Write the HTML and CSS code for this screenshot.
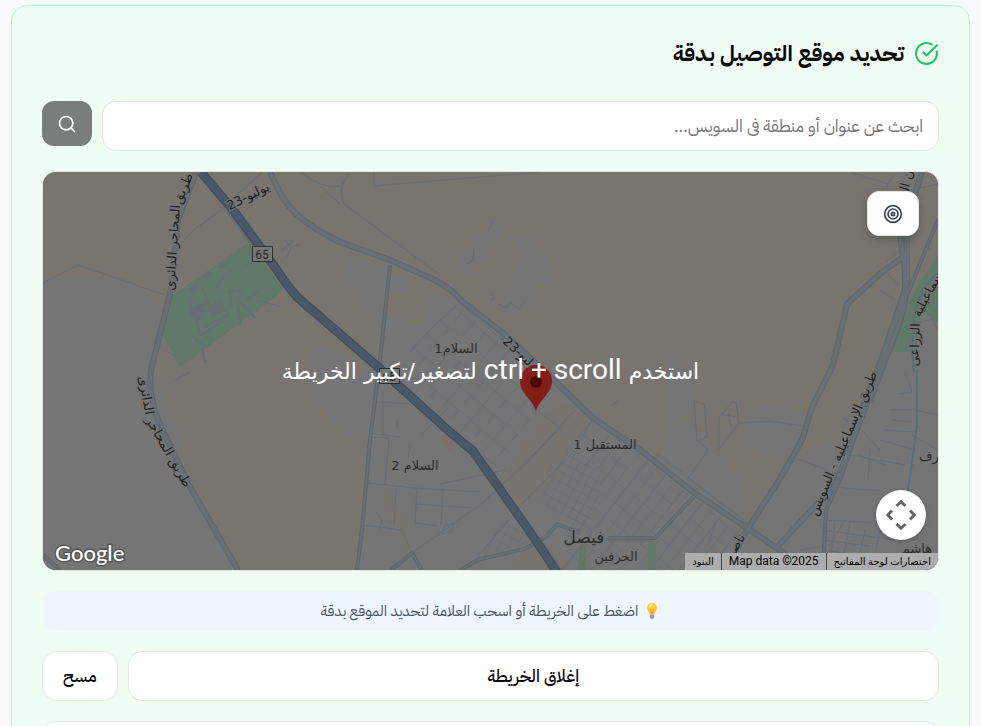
FILE: index.html
```
<!DOCTYPE html>
<html lang="ar" dir="rtl">
<head>
<meta charset="utf-8">
<meta name="viewport" content="width=device-width, initial-scale=1">
<title>تحديد موقع التوصيل</title>
<link rel="stylesheet" href="styles.css">
</head>
<body>
<main class="page">
  <section class="card">
    <header class="card-head">
      <svg class="check" viewBox="0 0 24 24" aria-hidden="true"><path d="M21.8 10A10 10 0 1 1 17 3.335"/><path d="m9 11 3 3L22 4"/></svg>
      <h1>تحديد موقع التوصيل بدقة</h1>
    </header>

    <form class="search">
      <input class="field" type="text" aria-label="ابحث عن عنوان" placeholder="ابحث عن عنوان أو منطقة فى السويس...">
      <button class="search-btn" type="button" aria-label="بحث">
        <svg viewBox="0 0 24 24" aria-hidden="true"><circle cx="11" cy="11" r="8"/><path d="m21 21-4.3-4.3"/></svg>
      </button>
    </form>

    <div class="map">
      <svg class="map-art" viewBox="43 172 895 398" preserveAspectRatio="xMidYMid slice" aria-hidden="true">
        <defs>
          <pattern id="blocks" width="30" height="19" patternUnits="userSpaceOnUse" patternTransform="rotate(40)"><path d="M0 0H30M0 0V19M15 0V10"/></pattern>
          <pattern id="dense" width="8" height="9" patternUnits="userSpaceOnUse" patternTransform="rotate(28)"><path d="M0 0H8M0 0V9"/></pattern>
          <pattern id="loose" width="23" height="17" patternUnits="userSpaceOnUse" patternTransform="rotate(38)"><path d="M0 0H23M0 0V17M12 0V17"/></pattern>
        </defs>
        <rect class="sand" x="43" y="172" width="895" height="398"/>
        <!-- built-up land -->
        <g class="urban">
          <path d="M43 278H125L143 290 160 308 150 370 166 400 178 430 184 462 205 515 237 570H43Z"/>
          <path d="M350 253 388 266 386 300 380 362 372 322 360 295 343 276Z"/>
          <path d="M391 276 407 278 408 289 399 293 389 288Z"/>
          <path d="M383 322 393 313 413 323 424 322 433 290 463 302 503 333 560 385 640 446 693 490 790 557 800 570H358L366 490 376 385Z"/>
          <path d="M308 355 322 347 335 352 350 367 376 374 374 435 345 435 318 405 306 380Z"/>
          <path d="M494 220 504 229 485 258 468 276 461 267 463 250Z"/>
          <path d="M508 235 532 238 552 267 551 283 538 285 535 301 523 313 508 317 497 305 511 292 513 273 522 253Z"/>
          <path d="M670 353 692 374 694 405 683 418 703 433 738 475 747 528 693 490 660 465 668 435Z"/>
          <path d="M747 410 775 402 806 415 802 438 780 462 744 445Z"/>
          <path d="M747 528 790 460 835 440 862 400 886 352 938 250V570H790Z"/>
        </g>
        <g class="sand2">
          <path d="M558 400 592 420 565 455 560 478 505 512 495 493 520 450Z"/>
          <path d="M536 540 565 560 570 570H505Z"/>
          <path d="M382 485 400 510 412 553 422 570 405 550Z"/>
        </g>
        <g class="green">
          <path d="M170 297 187 285 248 243 283 288 278 295 224 335 180 367 163 335Z"/>
          <path d="M938 255 915 290 900 323 886 352 911 352 920 338 922 312 938 323Z"/>
          <path d="M580 545H586V570H578ZM648 543H656V570H648Z"/>
        </g>
        <path class="blush" d="M440 440 448 432 458 440 450 451Z"/>
        <!-- street fabric -->
        <g class="fabric">
          <path fill="url(#blocks)" d="M411 350 458 303 555 386 500 470 470 447 398 374Z"/>
          <path fill="url(#dense)" d="M547 468 568 452 600 470 598 500 575 530 540 502Z"/>
          <path fill="url(#loose)" d="M564 452 592 420 693 492 655 541 648 570H560L575 530 598 500 600 472Z"/>
          <path fill="url(#loose)" d="M693 492 740 526 748 552 735 570H650L657 541Z"/>
          <path fill="url(#dense)" d="M500 524 530 528 545 545 500 552 475 560 490 540Z"/>
          <path fill="url(#dense)" d="M573 505 596 508 590 532 562 535Z"/>
        </g>
        <g class="lane">
          <path d="M43 283 78 265 165 295M182 243 196 228 220 211 262 172M300 172Q324 190 340 186M320 186 340 204M374 172V186L540 172M349 172 341 188 343 203 440 275"/>
          <path d="M281 251 294 241 289 240M285 240 291 248 287 257M293 246 300 245M493 222 487 233M474 249 473 260 467 264M491 292 495 299 490 300M498 304 506 308 511 303 519 309 524 302"/>
          <path d="M411 350 440 320 460 303 525 360M376 402 410 404M370 433 400 437M367 483 415 488 480 492M372 437 389 438 385 485M417 489 415 523 438 526M443 488 441 525M417 504 472 508M362 525 402 530 412 553M391 570 412 553 480 505 527 462 575 410"/>
          <path d="M383 390V434M397 420V428M410 445 408 460M376 512 382 520 379 530M396 489 394 525M445 525 455 523 451 532 442 534ZM475 560 522 504 575 450 592 420M527 462 560 428 530 405M421 435 448 408M440 484 505 470"/>
          <path d="M648 448 756 530M658 453 705 490 755 528M694 401 704 404 707 437 697 441ZM719 449V418L732 402H736L739 423 719 449M720 414 736 417M740 423 768 421 805 426M699 441 708 450 687 480M731 428 728 413M797 459 838 474M700 496 717 520 708 545M655 541H608L560 535"/>
          <path d="M850 172 888 184 886 193M895 175 882 190M900 192 938 184M885 270 898 286M880 290 895 300M886 262 900 250M843 418 860 428 880 450M850 455 905 465M835 487 880 491M825 520 880 523M822 540 870 546M885 430 915 432M880 440 915 450M870 448 868 480M858 455 886 465M905 172 900 215M925 240 930 250M920 180 934 172M890 410H912M892 420 912 422M915 410 938 415M912 435 938 450M800 550 830 545 845 520M822 530 895 540M822 550 890 560M835 520 830 565M850 522 842 565M865 530 857 565M880 530 873 565M918 323 932 319 938 330M905 372 912 392 900 394"/>
          <path d="M190 372 175 380M246 298 280 306M168 352 176 356M612 405 618 401"/>
        </g>
        <g class="parklane"><path d="M191 297V315L215 308M202 288 212 315M189 312 209 302M193 310 201 335 225 320M197 343 206 346M192 335 202 345 205 363M225 275 215 290M200 280 210 272M232 308 229 291 240 290V302L255 318M238 305 240 325M246 300 258 292M203 328 230 314M219 268 229 262M227 278 232 275M245 265 252 262"/><path class="building" d="M191 308 202 303 205 318 195 323ZM209 306 221 300 225 311 213 316ZM189 287 197 283 199 290 191 293Z"/></g>
        <path class="water" d="M917 370V425L908 490 902 530M938 272 924 288 915 310 912 350 914 372"/>
        <!-- secondary roads -->
        <g class="edge">
          <path d="M270 172 280 193Q294 220 340 242L390 260 435 280Q450 288 463 302L503 333 540 367 593 418 640 450 693 492 747 528 790 557 810 570"/>
          <path d="M196 172 178 220 171 290 151 370Q147 400 165 435L190 487 238 570"/>
          <path d="M906 255 882 272 847 304 833 365 812 407 802 440 778 482 750 525 738 545M777 547 835 485 880 370"/>
          <path d="M922 172Q905 220 907 262T893 340L870 400M895 200 905 270 905 290 883 355 862 410"/>
        </g>
        <g class="edge thin">
          <path d="M390 265 380 360 370 440 362 530 357 570"/>
          <path d="M460 570 480 559 525 549 546 537 557 524 580 533M608 538H655L697 493"/>
          <path d="M938 220 900 312 880 365 840 480 826 510 823 570"/>
          <path d="M43 555 60 570M391 570 412 553 422 570"/>
        </g>
        <g class="road">
          <path d="M270 172 280 193Q294 220 340 242L390 260 435 280Q450 288 463 302L503 333 540 367 593 418 640 450 693 492 747 528 790 557 810 570"/>
          <path d="M196 172 178 220 171 290 151 370Q147 400 165 435L190 487 238 570"/>
          <path d="M906 255 882 272 847 304 833 365 812 407 802 440 778 482 750 525 738 545M777 547 835 485 880 370"/>
          <path d="M922 172Q905 220 907 262T893 340L870 400M895 200 905 270 905 290 883 355 862 410"/>
        </g>
        <g class="road thin">
          <path d="M390 265 380 360 370 440 362 530 357 570"/>
          <path d="M460 570 480 559 525 549 546 537 557 524 580 533M608 538H655L697 493"/>
          <path d="M938 220 900 312 880 365 840 480 826 510 823 570"/>
          <path d="M43 555 60 570M391 570 412 553 422 570"/>
        </g>
        <path class="side" d="M226 208 252 243"/>
        <path class="highway-edge" d="M201 172 233 210 277 270Q285 283 297 297L340 334 378 367 450 432 473 451 497 485 537 542 557 572"/>
        <path class="highway" d="M201 172 233 210 277 270Q285 283 297 297L340 334 378 367 450 432 473 451 497 485 537 542 557 572"/>
        <g class="shield"><rect x="252.500" y="246.500" width="20" height="15"/><text x="262" y="259">65</text><rect x="379.500" y="368.500" width="20" height="15"/><text x="389" y="381">65</text></g>
        <g class="label street">
          <text transform="translate(187 190) rotate(-67)">طريق</text>
          <text transform="translate(177 248) rotate(-86)">المحاجر الدائرى</text>
          <text transform="translate(250 200) rotate(-27)">يوليو-23</text>
          <text transform="translate(519 358) rotate(43)">يوليو-23</text>
          <text transform="translate(142 396) rotate(80)">الدائرى</text>
          <text transform="translate(165 454) rotate(60)">طريق المحاجر</text>
          <text transform="translate(847 445) rotate(-67)">طريق الإسماعيليه - السويس</text>
          <text transform="translate(931 296) rotate(-62)">سماعيلية</text>
          <text transform="translate(919 345) rotate(-88)">الزراعى</text>
          <text transform="translate(910 184) rotate(-75)">ن ال</text>
          <text transform="translate(739 548) rotate(-60)">ناصر</text>
        </g>
        <g class="label place">
          <text x="456" y="353">السلام1</text>
          <text x="415" y="470">السلام 2</text>
          <text x="605" y="449">المستقبل 1</text>
          <text x="616" y="561">الحرفين</text>
          <text x="929" y="461">رف</text>
          <text x="917" y="553">هاشم</text>
          <text class="big" x="584" y="543">فيصل</text>
        </g>
        <path class="pin" d="M536 412C534 400 520 394 520 381A16 16 0 0 1 552 381C552 394 538 400 536 412Z"/>
        <circle class="pin-dot" cx="536" cy="382" r="6"/>
      </svg>

      <p class="hint"><span>استخدم <bdi class="keys">ctrl + scroll</bdi> لتصغير/تكبير الخريطة</span></p>
      <button class="locate" type="button" aria-label="موقعي">
        <svg viewBox="0 0 24 24" aria-hidden="true"><circle cx="12" cy="12" r="10"/><circle cx="12" cy="12" r="6"/><circle cx="12" cy="12" r="2"/></svg>
      </button>
      <button class="pan" type="button" aria-label="التحكم في الخريطة">
        <svg viewBox="0 0 30 30" aria-hidden="true"><path d="M10.500 6 15 1.800 19.500 6M10.500 24 15 28.200 19.500 24M6 10.500 1.800 15 6 19.500M24 10.500 28.200 15 24 19.500"/></svg>
      </button>
      <a class="brand" href="#">Google</a>
      <div class="credits"><a href="#">اختصارات لوحة المفاتيح</a><span dir="ltr">Map data ©2025</span><a href="#">البنود</a></div>
    </div>

    <p class="tip">
      <svg viewBox="0 0 16 16" aria-hidden="true"><path fill="#fcc934" d="M8 0a5 5 0 0 0-5 5c0 2.600 2.200 3.700 2.500 6.500h5C10.800 8.700 13 7.600 13 5a5 5 0 0 0-5-5Z"/><path fill="#fff0a0" d="M5 3a3 3 0 0 1 3-2v2L6 5Z"/><path fill="none" stroke="#f19b18" d="M6.500 6 7.500 11M9.500 6 8.500 11"/><path fill="#9aa3ab" d="M5.800 11.500h4.400v3L9 16H7l-1.200-1.500Z"/></svg>
      <span>اضغط على الخريطة أو اسحب العلامة لتحديد الموقع بدقة</span>
    </p>

    <div class="actions">
      <button class="btn wide" type="button">إغلاق الخريطة</button>
      <button class="btn" type="button">مسح</button>
    </div>
    <div class="panel"></div>
  </section>
</main>
</body>
</html>
```
FILE: styles.css
```
* { box-sizing: border-box; }

body {
  margin: 0;
  background: #f8fafc;
  color: #0a0a0a;
  font-family: "IBM Plex Sans Arabic", "Noto Sans Arabic", "DejaVu Sans", sans-serif;
}

button, input { font: inherit; }
svg { display: block; }
h1, p { margin: 0; }

.page { height: 100vh; padding: 5px 11px 0; overflow: hidden; }

.card {
  display: flex;
  flex-direction: column;
  gap: 20px;
  padding: 30px;
  border: 1px solid #bbf7d0;
  border-radius: 16px;
  background: #f0fdf4;
}

.card-head { display: flex; align-items: center; gap: 10px; height: 45px; padding-bottom: 10px; }
.card-head h1 { font-size: 22px; line-height: 32px; font-weight: 700; }
.check { width: 25px; height: 25px; fill: none; stroke: #22c55e; stroke-width: 2; stroke-linecap: round; stroke-linejoin: round; }

.search { display: flex; align-items: flex-start; gap: 10px; }
.field {
  flex: 1;
  min-width: 0;
  height: 50px;
  padding: 0 15px;
  border: 1px solid #e5e5e5;
  border-radius: 14px;
  background: #fff;
  font-size: 17px;
  font-weight: 400;
}
.field::placeholder { color: #757575; opacity: 1; }
.search-btn {
  display: grid;
  place-items: center;
  width: 50px;
  height: 45px;
  padding: 0;
  border: 0;
  border-radius: 12px;
  background: #787f7a;
}
.search-btn svg { width: 20px; height: 20px; fill: none; stroke: #fff; stroke-width: 2; stroke-linecap: round; }

.map {
  position: relative;
  height: 400px;
  border: 1px solid #e5e5e5;
  border-radius: 14px;
  overflow: hidden;
  background: #78746e;
}
.map-art { width: 100%; height: 100%; fill: none; }
.sand { fill: #78746e; }
.sand2 { fill: #77746f; }
.urban { fill: #757575; }
.green { fill: #607868; }
.blush { fill: #7c6f6e; }
.fabric path { stroke: none; }
pattern path { stroke: #656c75; stroke-width: 1; }
.lane { stroke: #656d77; stroke-width: 1; }
.parklane { stroke: #656e70; stroke-width: 2; }
.building { fill: #656e70; stroke: none; }
.water { stroke: #547078; stroke-width: 2; }
.edge { stroke: #5f656c; stroke-width: 6; stroke-linejoin: round; }
.road { stroke: #686e74; stroke-width: 4; stroke-linejoin: round; }
.edge.thin { stroke-width: 4; }
.road.thin { stroke-width: 2; }
.side { stroke: #656c73; stroke-width: 4; }
.highway-edge { stroke: #3e4a5a; stroke-width: 9; stroke-linejoin: round; }
.highway { stroke: #4a5769; stroke-width: 7; stroke-linejoin: round; }
.shield rect { fill: #787878; stroke: #303030; }
.shield text { fill: #252525; font: 400 12px Roboto, sans-serif; text-anchor: middle; }
.label text { direction: rtl; text-anchor: middle; fill: #1c1c1c; stroke: #757575; stroke-width: 2; paint-order: stroke; font-family: "DejaVu Sans", sans-serif; }
.label.street text { font-size: 13px; }
.label.place text { font-size: 13px; fill: #2b2b2b; }
.label.place .big { font-size: 17px; }
.pin { fill: #831d18; }
.pin-dot { fill: #4a0b08; }

.hint {
  position: absolute;
  inset: 0;
  display: grid;
  place-items: center;
  color: #fff;
  font: 22px/32px "DejaVu Sans", sans-serif;
}
.keys { font: 400 28px/32px Roboto, sans-serif; }
.locate {
  position: absolute;
  top: 19px;
  right: 19px;
  display: grid;
  place-items: center;
  width: 52px;
  height: 45px;
  padding: 0;
  border: 1px solid #e5e5e5;
  border-radius: 12px;
  background: #fff;
  box-shadow: 0 4px 8px #0003;
}
.locate svg { width: 20px; height: 20px; fill: none; stroke: #374151; stroke-width: 2; }
.pan {
  position: absolute;
  right: 12px;
  bottom: 30px;
  display: grid;
  place-items: center;
  width: 50px;
  height: 50px;
  padding: 0;
  border: 0;
  border-radius: 50%;
  background: #fff;
  box-shadow: 0 1px 4px #0004;
}
.pan svg { width: 30px; height: 30px; fill: none; stroke: #666; stroke-width: 3; }
.brand {
  position: absolute;
  left: 12px;
  bottom: 3px;
  color: #fff;
  text-decoration: none;
  font: 500 22px/28px Lato, sans-serif;
  -webkit-text-stroke: 3px #555;
  paint-order: stroke fill;
}
.credits {
  position: absolute;
  right: 0;
  bottom: 0;
  display: flex;
  background: #adadad;
  color: #000;
  font: 12px/17px Roboto, "DejaVu Sans", sans-serif;
}
.credits > * { padding: 0 7px; color: inherit; text-decoration: none; white-space: nowrap; }
.credits > * + * { border-right: 1px solid #444; }
.credits a { font-size: 10px; }

.tip {
  display: flex;
  align-items: center;
  justify-content: center;
  gap: 6px;
  height: 40px;
  border-radius: 14px;
  background: #eff6ff;
  color: #4b5563;
  font-size: 15px;
  font-weight: 400;
}
.tip svg { width: 16px; height: 16px; }

.actions { display: flex; gap: 10px; }
.btn {
  height: 50px;
  padding: 0 20px;
  border: 1px solid #e5e5e5;
  border-radius: 14px;
  background: #fff;
  color: #0a0a0a;
  font-size: 17px;
  font-weight: 500;
}
.wide { flex: 1; }
.panel { height: 60px; border: 1px solid #e5e5e5; border-radius: 14px; background: #fff; }
```
